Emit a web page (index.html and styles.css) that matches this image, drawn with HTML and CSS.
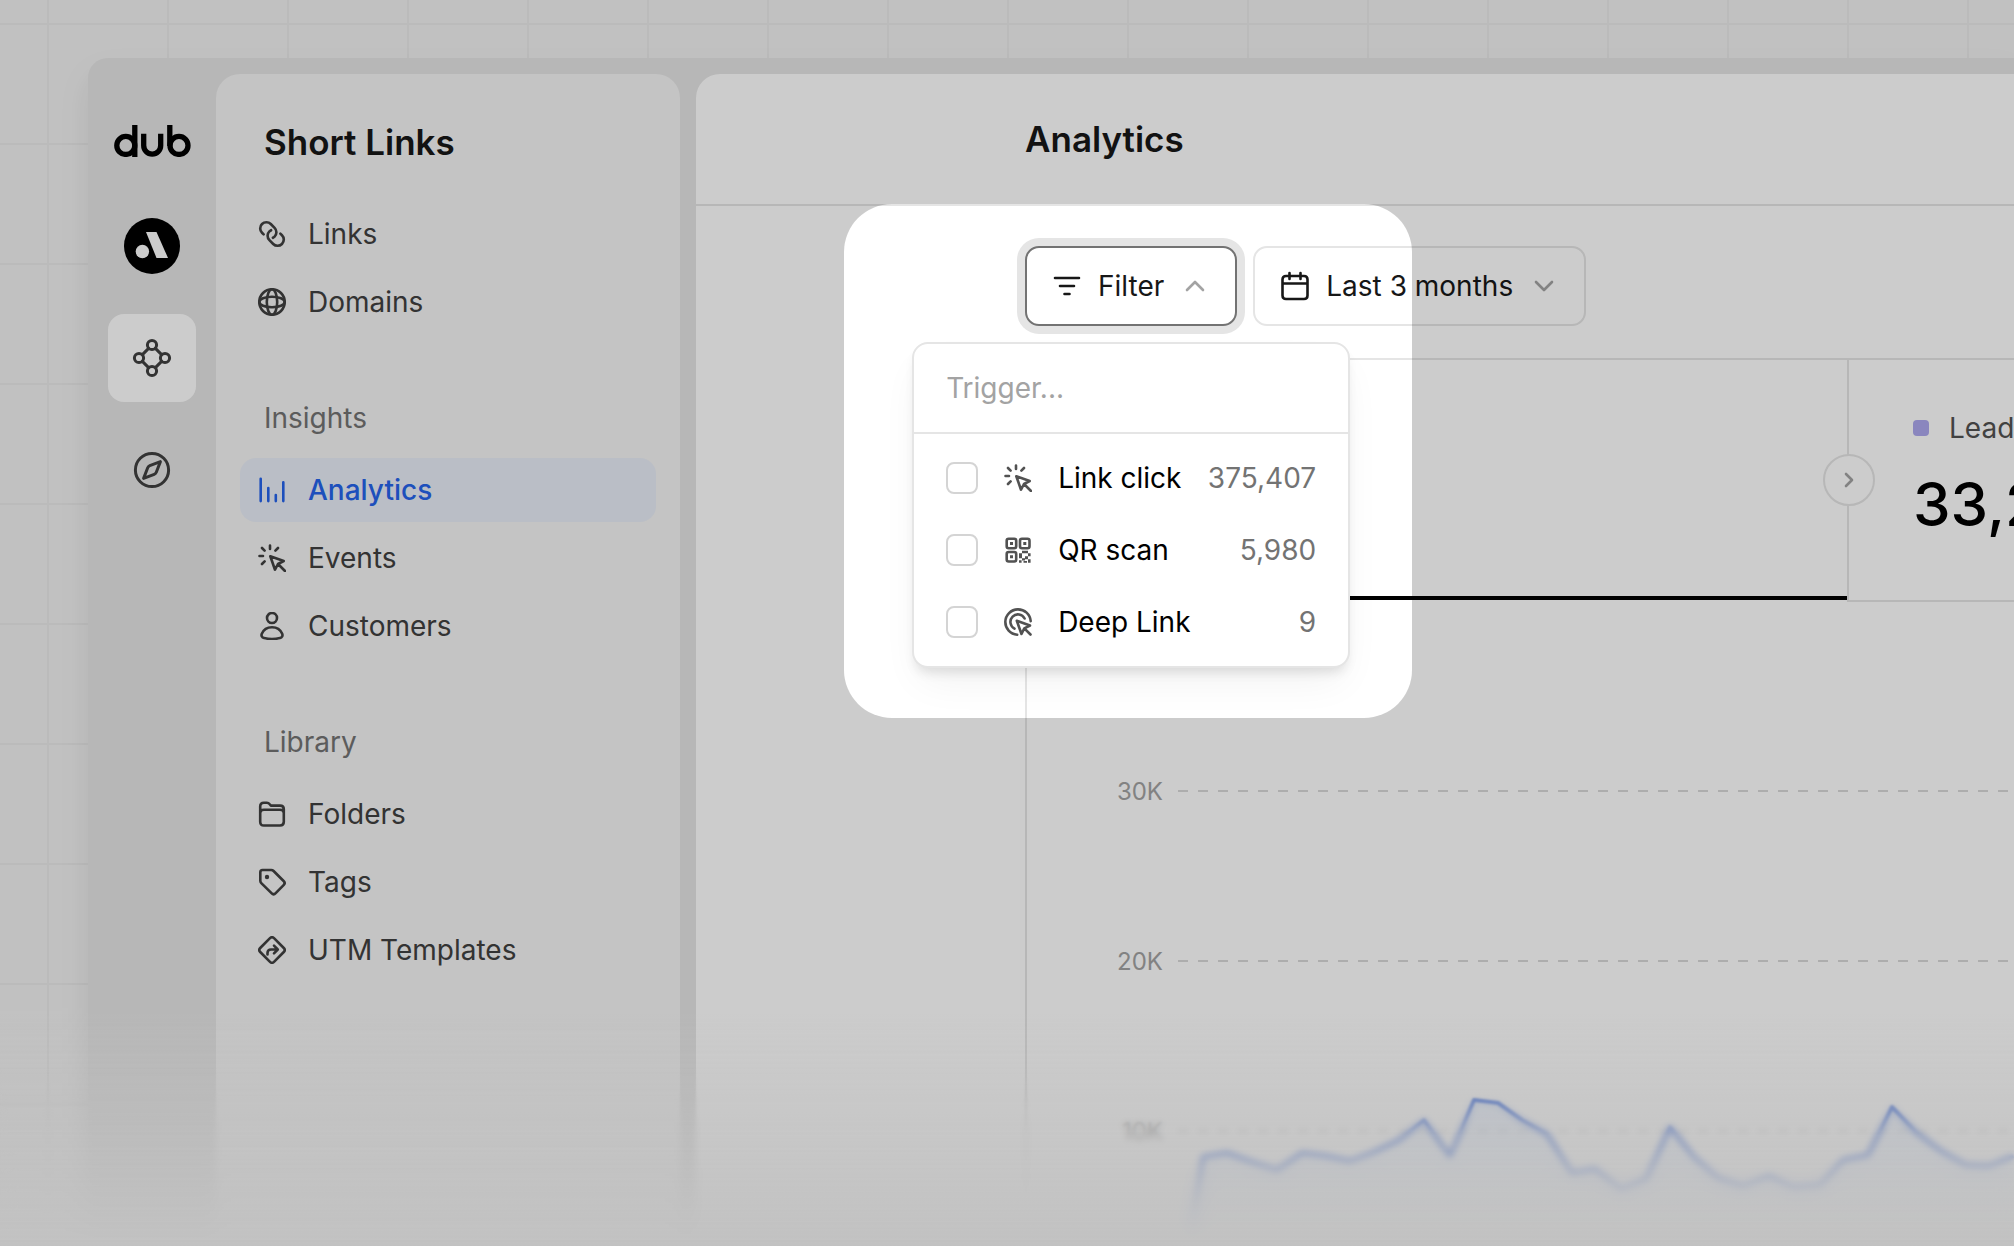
FILE: index.html
```html
<!DOCTYPE html>
<html lang="en">
<head>
	<meta charset="UTF-8">
	<meta name="viewport" content="width=device-width, initial-scale=1.0">
	<title>Analytics</title>

	<link rel="stylesheet" href="styles.css">
</head>
<body>
	<!-- shared icons -->
	<svg class="sprite" aria-hidden="true">
		<symbol id="cursor-rays" viewBox="0 0 28 28">
			<path d="M12 1.5v3.5M1.5 12H5M4 4l2.6 2.6M20 4l-2.6 2.6M4 20l2.6-2.6M12.3 12.3l13.4 4.7-5.7 3-3 5.7zM20 20l7 7" />
		</symbol>
	</svg>

	<div class="app">
		<nav class="rail" aria-label="Workspace">
			<a class="logo" href="#" aria-label="dub">
				<svg width="77" height="32" viewBox="0 0 77 32" fill="none" stroke="currentColor" stroke-width="5.3">
					<circle cx="11.8" cy="20.4" r="9" />
					<path d="M20.8 0v32M29.7 8.7v11.9a8.5 8.5 0 0 0 17 0V8.7M55.8 0v21" />
					<circle cx="65" cy="20.4" r="9" />
				</svg>
			</a>
			<a class="avatar" href="#" aria-label="Acme">
				<svg width="56" height="56" viewBox="0 0 56 56" fill="#fff">
					<circle cx="18.4" cy="33.5" r="6.7" />
					<path d="M22 14h10.5L44 40H32.5z" />
				</svg>
			</a>
			<a class="rail-link active" href="#" aria-label="Short Links">
				<svg class="icon-lg" viewBox="0 0 40 40">
					<circle cx="20" cy="7" r="4.6" />
					<circle cx="7" cy="20" r="4.6" />
					<circle cx="33" cy="20" r="4.6" />
					<circle cx="20" cy="33" r="4.6" />
					<path d="M16.6 10.4l-6.2 6.2M23.4 10.4l6.2 6.2M10.4 23.4l6.2 6.2M29.6 23.4l-6.2 6.2" />
				</svg>
			</a>
			<a class="rail-link" href="#" aria-label="Explore">
				<svg class="icon-lg" viewBox="0 0 40 40">
					<circle cx="20" cy="20" r="16.6" />
					<path d="M28.4 11.6l-10.6 4q-1.5.6-2.1 2.1l-4.1 10.7 10.6-4q1.5-.6 2.1-2.1z" />
				</svg>
			</a>
		</nav>

		<aside class="sidebar">
			<h2>Short Links</h2>
			<ul>
				<li><a href="#">
					<svg class="icon icon-link" viewBox="1 1 16 16">
						<path d="M8.5 6.827c-.352.168-.682.398-.973.69l-.01.01c-1.381 1.381-1.381 3.619 0 5l2.175 2.175c1.381 1.381 3.619 1.381 5 0l.01-.01c1.381-1.381 1.381-3.619 0-5l-.931-.931" />
						<path d="M9.5 11.173c.352-.168.682-.398.973-.69l.01-.01c1.381-1.381 1.381-3.619 0-5L8.308 3.298c-1.381-1.381-3.619-1.381-5 0l-.01.01c-1.381 1.381-1.381 3.619 0 5l.931.931" />
					</svg>
					Links
				</a></li>
				<li><a href="#">
					<svg class="icon" viewBox="0 0 28 28">
						<circle cx="14" cy="14" r="12.7" />
						<ellipse cx="14" cy="14" rx="5.2" ry="12.7" />
						<ellipse cx="14" cy="14" rx="12.7" ry="5.2" />
					</svg>
					Domains
				</a></li>
			</ul>

			<h3>Insights</h3>
			<ul>
				<li><a class="active" href="#" aria-current="page">
					<svg class="icon" viewBox="0 0 28 28">
						<path d="M2.7 2.7v22.4M10.3 12v13.1M17.8 19v6.1M25.3 6.3v18.8" />
					</svg>
					Analytics
				</a></li>
				<li><a href="#">
					<svg class="icon"><use href="#cursor-rays" /></svg>
					Events
				</a></li>
				<li><a href="#">
					<svg class="icon" viewBox="0 0 28 28">
						<circle cx="14" cy="6" r="5" />
						<path d="M14 15.3c4.7 0 8.6 2.7 10.2 6.5.8 1.9-.2 3.8-2.2 4.3-5.1 1.2-10.9 1.2-16 0-2-.5-3-2.4-2.2-4.3 1.6-3.8 5.5-6.5 10.2-6.5z" />
					</svg>
					Customers
				</a></li>
			</ul>

			<h3>Library</h3>
			<ul>
				<li><a href="#">
					<svg class="icon" viewBox="0 0 28 28">
						<path d="M2.2 13V6.5q0-3.7 3.7-3.7h3q1.6 0 2.6 1.2l1.4 1.6h9.2q3.7 0 3.7 3.7v12.5q0 3.7-3.7 3.7H5.9q-3.7 0-3.7-3.7V13q0-3.2 3.7-3.2h16.2q3.7 0 3.7 3.2" />
					</svg>
					Folders
				</a></li>
				<li><a href="#">
					<svg class="icon" viewBox="0 0 28 28">
						<path d="M2.3 4.2q0-2.2 2.2-2.2h8.7q1.4 0 2.4 1l10 10q2.1 2.1 0 4.2l-7.9 8q-2.1 2.1-4.2 0L3.3 15.1q-1-1-1-2.4z" />
						<circle class="dot" cx="9" cy="9" r="2.2" />
					</svg>
					Tags
				</a></li>
				<li><a href="#">
					<svg class="icon" viewBox="0 0 28 28">
						<path d="M12 2.2q2-2 4 0l9.8 9.8q2 2 0 4L16 25.8q-2 2-4 0L2.2 16q-2-2 0-4z" />
						<path d="M9.5 18.5V17q0-3.5 3.5-3.5h6M16 9.7l3.8 3.8-3.8 3.8" />
					</svg>
					UTM Templates
				</a></li>
			</ul>
		</aside>

		<main class="main">
			<header class="page-header">
				<h1>Analytics</h1>
			</header>

			<div class="content">
				<div class="toolbar">
					<div class="filter">
						<button class="btn btn-open" type="button" aria-expanded="true">
							<svg class="icon-md" viewBox="0 0 32 32"><path d="M4 8h24M9 16h14M13.5 24h5" /></svg>
							Filter
							<svg class="icon-md chevron" viewBox="0 0 32 32"><path d="M8 20l8-8 8 8" /></svg>
						</button>

						<div class="menu">
							<input class="menu-search" type="text" placeholder="Trigger..." aria-label="Trigger">
							<ul>
								<li><label>
									<input type="checkbox">
									<svg class="icon"><use href="#cursor-rays" /></svg>
									Link click
									<span class="count">375,407</span>
								</label></li>
								<li><label>
									<input type="checkbox">
									<svg class="icon" viewBox="0 0 28 28">
										<rect x="2.7" y="2.7" width="9.5" height="9.5" rx="2" />
										<rect x="16" y="2.7" width="9.5" height="9.5" rx="2" />
										<rect x="2.7" y="16" width="9.5" height="9.5" rx="2" />
										<path class="dot" d="M6 6h3v3H6zM19.3 6h3v3h-3zM6 19.3h3v3H6zM18 14.7h6v2.6h-6zM15 17.3h3v5h-3zM24 17.3h2.6v3H24zM21 20.3h3v3h-3zM18 22.3h3v2.3h-3zM15 24.3h2.6v2.5H15zM19.5 25H23v1.8h-3.5zM24 23.3h2.6v3.5H24z" />
									</svg>
									QR scan
									<span class="count">5,980</span>
								</label></li>
								<li><label>
									<input type="checkbox">
									<svg class="icon" viewBox="0 0 28 28">
										<path d="M13.2 26.7A12.7 12.7 0 1 1 26.7 13.2M10.5 20.6A7.5 7.5 0 1 1 20.6 10.5M12.8 12.8l13.2 4.7-5.7 2.8-2.8 5.7zM20.3 20.3l6.2 6.2" />
									</svg>
									Deep Link
									<span class="count">9</span>
								</label></li>
							</ul>
						</div>
					</div>

					<button class="btn" type="button">
						<svg class="icon-md" viewBox="0 0 32 32"><path d="M7 6h18q3.5 0 3.5 3.5v16q0 3.500-3.500 3.500H7q-3.500 0-3.500-3.500v-16Q3.500 6 7 6zM3.500 13.500h25M10.500 3v6M21.500 3v6" /></svg>
						Last 3 months
						<svg class="icon-md chevron" viewBox="0 0 32 32"><path d="M8 12l8 8 8-8" /></svg>
					</button>
				</div>

				<section class="card">
					<div class="tabs">
						<a class="tab selected" href="#" aria-label="Clicks"></a>
						<a class="tab" href="#">
							<span class="tab-label">Leads</span>
							<span class="tab-value">33,2</span>
						</a>
						<button class="next" type="button" aria-label="Next step">
							<svg viewBox="0 0 20 20" width="20" height="20"><path d="M7 4l6 6-6 6" /></svg>
						</button>
					</div>

					<svg class="chart" role="img" aria-label="Clicks over the last 3 months">
						<defs>
							<linearGradient id="area" x1="0" y1="0" x2="0" y2="1">
								<stop offset="0" stop-color="#3b82f6" stop-opacity=".1" />
								<stop offset="1" stop-color="#3b82f6" stop-opacity=".02" />
							</linearGradient>
						</defs>
						<g class="grid">
							<line x1="151" x2="100%" y1="189" y2="189" />
							<line x1="151" x2="100%" y1="359" y2="359" />
							<line x1="151" x2="100%" y1="529" y2="529" />
						</g>
						<g class="ticks">
							<text x="136" y="198">30K</text>
							<text x="136" y="368">20K</text>
							<text x="136" y="538">10K</text>
						</g>
						<path fill="url(#area)" d="M163 700L176 555 200 551 225 560 250 568 275 551 299 554 323 559 347 550 372 538 397 518 423 554 447 498 471 501 495 518 520 532 545 571 568 567 594 587 619 577 643 525 667 555 691 576 716 584 742 574 766 585 793 583 816 558 841 553 865 505 889 530 914 549 939 563 962 564 986 554V700z" />
						<path class="line" d="M163 635L176 555 200 551 225 560 250 568 275 551 299 554 323 559 347 550 372 538 397 518 423 554 447 498 471 501 495 518 520 532 545 571 568 567 594 587 619 577 643 525 667 555 691 576 716 584 742 574 766 585 793 583 816 558 841 553 865 505 889 530 914 549 939 563 962 564 986 554" />
					</svg>
				</section>
			</div>
		</main>
	</div>

	<!-- bottom fade, each layer blurs a bit more -->
	<div class="fade">
		<div class="blur blur-1"></div>
		<div class="blur blur-2"></div>
		<div class="blur blur-3"></div>
		<div class="tint"></div>
	</div>
	<div class="spotlight"></div>
</body>
</html>
```
FILE: styles.css
```css
*,
*::before,
*::after {
	margin: 0;
	padding: 0;
	box-sizing: border-box;
}

:root {
	--bg: #f2f2f2;
	--bg-line: #eaeaea;
	--frame: #e5e5e5;
	--panel: #f5f5f5;
	--border: #e5e5e5;
	--text: #171717;
	--text-nav: #404040;
	--text-muted: #737373;
	--text-light: #a3a3a3;
	--blue: #2563eb;
	--blue-bg: #e9eef8;
}

body {
	position: relative;
	display: flex;
	height: 100vh;
	padding: 58px 0 0 88px;
	overflow: hidden;
	color: var(--text);
	font-family: Inter, sans-serif;
	font-size: 28px;
	line-height: 40px;
	background-color: var(--bg);
	background-image:
		linear-gradient(var(--bg-line) 2px, transparent 2px),
		linear-gradient(to right, var(--bg-line) 2px, transparent 2px);
	background-size: 120px 120px;
	background-position: 47px 23px;
}

ul {
	list-style: none;
}

a {
	color: inherit;
	text-decoration: none;
}

button,
input {
	font: inherit;
	color: inherit;
}

h1,
h2 {
	font-size: 35px;
	font-weight: 600;
}

/* icons */
svg {
	display: block;
	flex: none;
}

.sprite {
	position: absolute;
	width: 0;
	height: 0;
}

.icon,
.icon-md,
.icon-lg,
.next svg {
	fill: none;
	stroke: currentColor;
	stroke-width: 2.6;
	stroke-linecap: round;
	stroke-linejoin: round;
}

.icon {
	width: 28px;
	height: 28px;
}

.icon-link {
	stroke-width: 1.5;
}

.icon-md {
	width: 32px;
	height: 32px;
}

.icon-lg {
	width: 40px;
	height: 40px;
	stroke-width: 3;
}

.icon .dot {
	fill: currentColor;
	stroke: none;
}

.chevron {
	color: var(--text-light);
}

/**
* App frame
*/
.app {
	flex: 1;
	min-width: 0;
	display: flex;
	padding-top: 16px;
	background: var(--frame);
	border-top-left-radius: 20px;
	box-shadow: 0 16px 32px rgba(0, 0, 0, 0.08);
}

.rail {
	width: 128px;
	display: flex;
	flex-direction: column;
	align-items: center;
	padding-top: 51px;
	color: var(--text-nav);
}

.logo {
	color: #000;
}

.avatar {
	margin: 61px 0 40px;
	border-radius: 50%;
	background: #000;
}

.rail-link {
	width: 88px;
	height: 88px;
	display: grid;
	place-items: center;
	margin-bottom: 24px;
	border-radius: 16px;
}

.rail-link.active {
	background: #fff;
}

/**
* Sidebar
*/
.sidebar {
	width: 464px;
	flex: none;
	padding: 48px 24px 0;
	background: var(--panel);
	border-radius: 24px 24px 0 0;
	color: var(--text-nav);
}

.sidebar h2,
.sidebar h3 {
	padding-left: 24px;
}

.sidebar h2 {
	margin-bottom: 40px;
	color: var(--text);
}

.sidebar h3 {
	margin: 64px 0 20px;
	color: var(--text-muted);
	font-size: 28px;
	font-weight: 400;
}

.sidebar ul {
	display: grid;
	gap: 4px;
}

.sidebar li a {
	height: 64px;
	display: flex;
	align-items: center;
	gap: 22px;
	padding: 0 18px;
	border-radius: 16px;
}

.sidebar li a.active {
	background: var(--blue-bg);
	color: var(--blue);
	font-weight: 500;
}

/**
* Main
*/
.main {
	flex: 1;
	min-width: 0;
	margin-left: 16px;
	display: flex;
	flex-direction: column;
	overflow: hidden;
	background: #fff;
	border-top-left-radius: 24px;
}

.page-header {
	height: 132px;
	flex: none;
	display: flex;
	align-items: center;
	padding-left: 329px;
	border-bottom: 2px solid var(--border);
}

.content {
	flex: 1;
	display: flex;
	flex-direction: column;
	padding: 40px 0 0 329px;
}

.toolbar {
	display: flex;
	gap: 16px;
	margin-bottom: 32px;
}

.btn {
	height: 80px;
	display: flex;
	align-items: center;
	gap: 15px;
	padding: 0 24px;
	border: 2px solid var(--border);
	border-radius: 14px;
	background: #fff;
	white-space: nowrap;
}

.btn-open {
	border-color: #737373;
	box-shadow: 0 0 0 8px #e5e5e5;
}

/* filter dropdown */
.filter {
	position: relative;
}

.menu {
	position: absolute;
	top: calc(100% + 16px);
	left: 50%;
	z-index: 2;
	width: 438px;
	transform: translateX(-50%);
	border: 2px solid var(--border);
	border-radius: 16px;
	background: #fff;
	box-shadow: 0 20px 40px -8px rgba(0, 0, 0, 0.06), 0 8px 12px -4px rgba(0, 0, 0, 0.12);
}

.menu-search {
	width: 100%;
	height: 90px;
	padding: 0 32px;
	border: 0;
	border-bottom: 2px solid var(--border);
	background: none;
	outline: none;
}

.menu-search::placeholder {
	color: var(--text-light);
	opacity: 1;
}

.menu ul {
	padding: 8px 32px;
}

.menu label {
	height: 72px;
	display: flex;
	align-items: center;
	color: #000;
}

.menu input[type="checkbox"] {
	width: 32px;
	height: 32px;
	appearance: none;
	border: 2px solid #d4d4d4;
	border-radius: 8px;
}

.menu .icon {
	margin: 0 26px;
	color: #525252;
}

.count {
	margin-left: auto;
	color: var(--text-muted);
}

/**
* Chart card
*/
.card {
	flex: 1;
	border: 2px solid var(--border);
	border-width: 2px 0 0 2px;
	border-radius: 24px 0 0;
}

.tabs {
	position: relative;
	display: flex;
	--tab-width: 820px;
}

.tab {
	width: var(--tab-width);
	height: 242px;
	flex: none;
	padding: 48px 64px 0;
	border-bottom: 2px solid var(--border);
}

.tab + .tab {
	border-left: 2px solid var(--border);
}

.tab.selected {
	border-bottom: 0;
	background: linear-gradient(#000, #000) 0 236px / 100% 4px no-repeat;
}

.tab-label {
	display: flex;
	align-items: center;
	gap: 20px;
	margin-bottom: 20px;
	color: #525252;
}

.tab-label::before {
	content: "";
	width: 16px;
	height: 16px;
	border-radius: 4px;
	background: #ada8ee;
}

.tab-value {
	display: block;
	color: #000;
	font-size: 60px;
	font-weight: 500;
	line-height: 72px;
}

.next {
	position: absolute;
	top: 94px;
	left: calc(var(--tab-width) - 24px);
	width: 52px;
	height: 52px;
	display: grid;
	place-items: center;
	border: 2px solid var(--border);
	border-radius: 50%;
	background: #fff;
	color: var(--text-light);
}

.chart {
	width: 100%;
	height: 700px;
}

.chart .grid {
	stroke: #d9d9d9;
	stroke-width: 2;
	stroke-dasharray: 10 10;
}

.chart .ticks {
	fill: var(--text-light);
	font-size: 24px;
	text-anchor: end;
}

.chart .line {
	fill: none;
	stroke: #4a78e6;
	stroke-width: 4;
	stroke-linejoin: round;
}

/**
* Overlays
*/
.fade,
.blur,
.tint {
	position: absolute;
	inset: auto 0 0;
	pointer-events: none;
}

.fade {
	z-index: 3;
	height: 240px;
}

.blur,
.tint {
	top: 0;
}

.blur-1 {
	backdrop-filter: blur(1px);
	mask-image: linear-gradient(transparent 25%, #000 40%);
}

.blur-2 {
	backdrop-filter: blur(3px);
	mask-image: linear-gradient(transparent 36%, #000 54%);
}

.blur-3 {
	backdrop-filter: blur(8px);
	mask-image: linear-gradient(transparent 60%, #000 90%);
}

.tint {
	background: linear-gradient(rgba(242, 242, 242, 0), rgba(242, 242, 242, 0.45) 50%, var(--bg));
}

/* dims the page except for the filter area */
.spotlight {
	position: absolute;
	top: 204px;
	left: 844px;
	z-index: 4;
	width: 568px;
	height: 514px;
	border-radius: 48px;
	box-shadow: 0 0 0 200vmax rgba(0, 0, 0, 0.2);
	pointer-events: none;
}
```
